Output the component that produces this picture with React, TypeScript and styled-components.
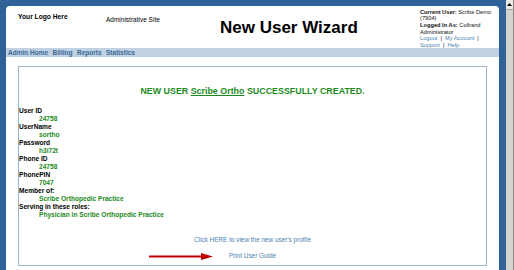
import styled, { createGlobalStyle } from 'styled-components';

const GlobalStyle = createGlobalStyle`
  html, body {
    margin: 0;
    padding: 0;
    background: #2f6398;
    font-family: 'Liberation Sans', Arial, sans-serif;
  }
`;

const Window = styled.div`
  display: flex;
  width: 514px;
  height: 270px;
  overflow: hidden;
  background: #2f6398;
`;

const Viewport = styled.div`
  flex: 1;
  padding: 6px 7px 0 6px;
  display: flex;
  flex-direction: column;
`;

const Page = styled.div`
  flex: 1;
  background: #ffffff;
  border-radius: 4px 4px 0 0;
  display: flex;
  flex-direction: column;
  min-height: 0;
`;

const Header = styled.div`
  display: grid;
  grid-template-columns: 88px 114px 200px 1fr;
  padding-left: 12px;
  height: 42px;
  color: #000;
`;

const Logo = styled.div`
  font-size: 6.7px;
  font-weight: bold;
  line-height: 8px;
  padding-top: 7px;
`;

const SiteName = styled.div`
  font-size: 6.5px;
  line-height: 8px;
  padding-top: 10px;
`;

const PageTitle = styled.h1`
  margin: 0;
  font-size: 17px;
  font-weight: bold;
  line-height: 20px;
  padding-top: 12px;
  white-space: nowrap;
`;

const UserInfo = styled.div`
  font-size: 5.7px;
  line-height: 6.7px;
  padding-top: 2.6px;
  color: #111;
  white-space: nowrap;
`;

const InfoLabel = styled.b`
  font-weight: bold;
`;

const HeaderLink = styled.a`
  color: #4d7fae;
  text-decoration: none;
`;

const Pipe = styled.span`
  margin: 0 3px;
`;

const NavBar = styled.nav`
  display: flex;
  gap: 4.5px;
  align-items: center;
  height: 9px;
  padding-left: 2px;
  background: #bfd1e3;
`;

const NavItem = styled.a`
  font-size: 6.5px;
  font-weight: bold;
  color: #3a6893;
  text-decoration: none;
  line-height: 9px;
`;

const Body = styled.div`
  flex: 1;
  min-height: 0;
  padding: 9px 12px 4px 12px;
  display: flex;
`;

const ResultBox = styled.div`
  flex: 1;
  border: 1px solid #9db6cf;
  display: flex;
  flex-direction: column;
`;

const SuccessTitle = styled.h2`
  margin: 0;
  padding-top: 19px;
  text-align: center;
  font-size: 8.9px;
  font-weight: bold;
  line-height: 10px;
  color: #1d8a1d;
`;

const NameLink = styled.span`
  text-decoration: underline;
`;

const Fields = styled.dl`
  margin: 11px 0 0 0;
  font-size: 6.6px;
  font-weight: bold;
  line-height: 8px;
`;

const FieldLabel = styled.dt`
  color: #000;
  margin: 0;
`;

const FieldValue = styled.dd`
  color: #1d8a1d;
  margin: 0 0 0 20px;
`;

const Actions = styled.div`
  margin-top: 17px;
  display: flex;
  flex-direction: column;
  align-items: center;
  gap: 8px;
`;

const ActionLink = styled.a`
  display: block;
  font-size: 6.4px;
  line-height: 8px;
  color: #4d7fae;
  text-decoration: none;
`;

const GuideRow = styled.div`
  position: relative;
  display: flex;
`;

const Arrow = styled.svg`
  position: absolute;
  right: calc(100% + 16px);
  top: 1px;
`;

const Scrollbar = styled.div`
  width: 8px;
  background: #d6d3cc;
  border-right: 1px solid #8a8883;
  box-sizing: border-box;
  display: flex;
  flex-direction: column;
`;

const ScrollButton = styled.div`
  height: 9px;
  background: #ece9e3;
  border-bottom: 1px solid #a7a49e;
  display: flex;
  align-items: center;
  justify-content: center;
`;

const fields: [string, string][] = [
  ['User ID', '24758'],
  ['UserName', 'sortho'],
  ['Password', 'h3i72t'],
  ['Phone ID', '24758'],
  ['PhonePIN', '7047'],
  ['Member of:', 'Scribe Orthopedic Practice'],
  ['Serving in these roles:', 'Physician in Scribe Orthopedic Practice'],
];

export default function App() {
  return (
    <>
      <GlobalStyle />
      <Window>
        <Viewport>
          <Page>
            <Header>
              <Logo>Your Logo Here</Logo>
              <SiteName>Administrative Site</SiteName>
              <PageTitle>New User Wizard</PageTitle>
              <UserInfo>
                <InfoLabel>Current User:</InfoLabel> Scribe Demo
                <br />
                (7904)
                <br />
                <InfoLabel>Logged In As:</InfoLabel> Collrand
                <br />
                Administrator
                <br />
                <HeaderLink>Logout</HeaderLink>
                <Pipe>|</Pipe>
                <HeaderLink>My Account</HeaderLink>
                <Pipe>|</Pipe>
                <br />
                <HeaderLink>Support</HeaderLink>
                <Pipe>|</Pipe>
                <HeaderLink>Help</HeaderLink>
              </UserInfo>
            </Header>
            <NavBar>
              <NavItem>Admin Home</NavItem>
              <NavItem>Billing</NavItem>
              <NavItem>Reports</NavItem>
              <NavItem>Statistics</NavItem>
            </NavBar>
            <Body>
              <ResultBox>
                <SuccessTitle>
                  NEW USER <NameLink>Scribe Ortho</NameLink> SUCCESSFULLY CREATED.
                </SuccessTitle>
                <Fields>
                  {fields.map(([label, value]) => (
                    <div key={label}>
                      <FieldLabel>{label}</FieldLabel>
                      <FieldValue>{value}</FieldValue>
                    </div>
                  ))}
                </Fields>
                <Actions>
                  <ActionLink>Click HERE to view the new user's profile</ActionLink>
                  <GuideRow>
                    <Arrow width="64" height="7" viewBox="0 0 64 7">
                      <line x1="0" y1="3.5" x2="55" y2="3.5" stroke="#c00000" strokeWidth="2" />
                      <polygon points="52,0 64,3.5 52,7" fill="#c00000" />
                    </Arrow>
                    <ActionLink>Print User Guide</ActionLink>
                  </GuideRow>
                </Actions>
              </ResultBox>
            </Body>
          </Page>
        </Viewport>
        <Scrollbar>
          <ScrollButton>
            <svg width="5" height="3" viewBox="0 0 5 3">
              <polygon points="2.5,0 5,3 0,3" fill="#000" />
            </svg>
          </ScrollButton>
        </Scrollbar>
      </Window>
    </>
  );
}
